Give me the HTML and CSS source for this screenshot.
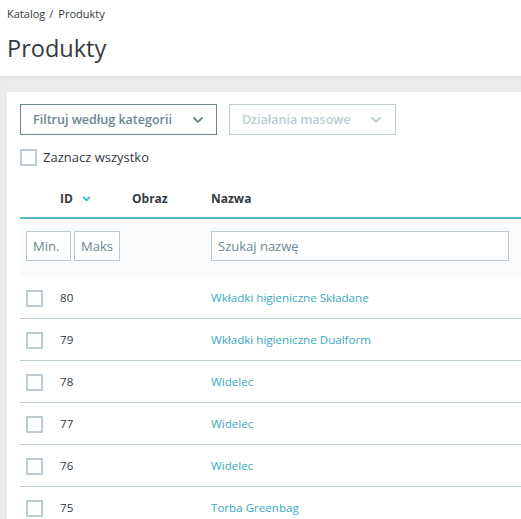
FILE: index.html
```html
<!DOCTYPE html>
<html lang="pl">
<head>
<meta charset="utf-8">
<title>Produkty</title>
<link rel="stylesheet" href="styles.css">
</head>
<body>
<header class="page-head">
  <nav class="crumbs"><span>Katalog</span><span class="sep">/</span><span>Produkty</span></nav>
  <h1 class="title">Produkty</h1>
</header>
<main class="main">
  <section class="card">
    <div class="actions">
      <button class="btn">Filtruj według kategorii
        <svg class="chev" viewBox="0 0 12 8" width="12" height="8"><path d="M1.5 1.5 6 6l4.5-4.5" fill="none" stroke="currentColor" stroke-width="1.8"/></svg>
      </button>
      <button class="btn btn-disabled">Działania masowe
        <svg class="chev" viewBox="0 0 12 8" width="12" height="8"><path d="M1.5 1.5 6 6l4.5-4.5" fill="none" stroke="currentColor" stroke-width="1.8"/></svg>
      </button>
    </div>
    <label class="select-all"><span class="box"></span>Zaznacz wszystko</label>

    <div class="table">
      <div class="row head">
        <div></div>
        <div class="th">ID <svg class="sort" viewBox="0 0 10 7" width="9" height="6"><path d="M1 1l4 4 4-4" fill="none" stroke="currentColor" stroke-width="2"/></svg></div>
        <div class="th">Obraz</div>
        <div class="th">Nazwa</div>
      </div>
      <div class="filters">
        <input class="inp inp-min" placeholder="Min.">
        <input class="inp inp-max" placeholder="Maks">
        <input class="inp inp-name" placeholder="Szukaj nazwę">
      </div>
      <div class="row item"><div><span class="box"></span></div><div>80</div><div></div><div><a class="link">Wkładki higieniczne Składane</a></div></div>
      <div class="row item"><div><span class="box"></span></div><div>79</div><div></div><div><a class="link">Wkładki higieniczne Dualform</a></div></div>
      <div class="row item"><div><span class="box"></span></div><div>78</div><div></div><div><a class="link">Widelec</a></div></div>
      <div class="row item"><div><span class="box"></span></div><div>77</div><div></div><div><a class="link">Widelec</a></div></div>
      <div class="row item"><div><span class="box"></span></div><div>76</div><div></div><div><a class="link">Widelec</a></div></div>
      <div class="row item"><div><span class="box"></span></div><div>75</div><div></div><div><a class="link">Torba Greenbag</a></div></div>
    </div>
  </section>
</main>
</body>
</html>
```

FILE: styles.css
```css
* { box-sizing: border-box; }
html, body { margin: 0; padding: 0; }
body {
  font-family: "Open Sans", "Noto Sans", sans-serif;
  color: #363a41;
  background: #eaebec;
  overflow: hidden;
}
.page-head {
  background: #fff;
  height: 76px;
  padding: 6px 7px 0;
}
.crumbs {
  font-size: 11px;
  line-height: 16px;
  color: #363a41;
}
.crumbs .sep { margin: 0 5px 0 4px; }
.title {
  margin: 10px 0 0;
  font-size: 23.5px;
  font-weight: 400;
  line-height: 32px;
  color: #363a41;
}
.main {
  padding: 16px 0 0 7px;
  box-shadow: inset 0 2px 2px -1px rgba(0,0,0,0.08);
}
.card {
  background: #fff;
  padding: 12px 0 40px 13px;
}
.actions { display: flex; gap: 12px; }
.btn {
  font-family: inherit;
  font-size: 12.5px;
  font-weight: 600;
  height: 31px;
  padding: 0 12px 0 12px;
  background: #fff;
  color: #6c868e;
  border: 1px solid #6c868e;
  border-radius: 0;
  display: flex;
  align-items: center;
  gap: 20px;
}
.btn-disabled { color: #bbcdd2; border-color: #bbcdd2; gap: 19px; padding-right: 13px; }
.chev { display: block; }
.select-all {
  display: flex;
  align-items: center;
  gap: 6px;
  margin-top: 13px;
  font-size: 13px;
  line-height: 18px;
}
.box {
  display: block;
  width: 17px;
  height: 17px;
  border: 2px solid #bbcdd2;
  background: #fff;
}
.table { margin-top: 14px; }
.row {
  display: grid;
  grid-template-columns: 40px 72px 79px 1fr;
  align-items: center;
}
.head {
  height: 39px;
  border-bottom: 2px solid #5db6c6;
  font-size: 12px;
  font-weight: 700;
}
.th { display: flex; align-items: center; gap: 9px; }
.sort { color: #25b9d7; }
.filters {
  background: #fafbfc;
  height: 58px;
  padding: 12px 0 0 6px;
  display: flex;
}
.inp {
  font-family: inherit;
  font-size: 13px;
  height: 30px;
  border: 1px solid #bbcdd2;
  padding: 0 6px;
  color: #363a41;
  background: #fff;
  outline: none;
}
.inp::placeholder { color: #6c868e; }
.inp-min { width: 45px; }
.inp-max { width: 46px; margin-left: 3px; }
.inp-name { width: 298px; margin-left: 91px; }
.item {
  height: 42px;
  border-bottom: 1px solid #bbcdd2;
  font-size: 11.6px;
}
.item .box { margin-left: 6px; margin-top: 1px; }
.link { color: #3aa9c0; text-decoration: none; }
```
